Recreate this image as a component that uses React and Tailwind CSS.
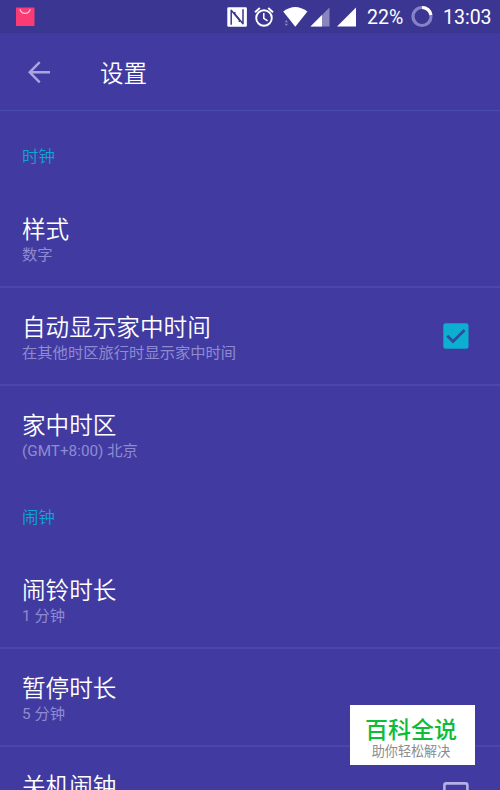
function StatusBar() {
  return (
    <div className="flex h-[33px] shrink-0 items-center bg-[#3a3692] text-white">
      <svg className="ml-4 h-[33px] w-[19px]" viewBox="0 0 19 33">
        <rect x="0" y="7.5" width="18.5" height="18.5" rx="0.8" fill="#fb3b74" />
        <path d="M4 9.2 A5.2 5.2 0 0 0 14.2 9.2" fill="none" stroke="#ffc6dc" strokeWidth="1.3" />
      </svg>
      <svg className="ml-[192px] h-[33px] w-[131px]" viewBox="227 0 131 33" fill="#fff">
        <rect x="227.3" y="7.2" width="19.6" height="19.6" rx="1.2" />
        <g fill="none" stroke="#3a3692" strokeWidth="1.5" strokeLinejoin="round">
          <path d="M231.2 24.8 V10.2 L239.4 20 V22" />
          <path d="M243 9.2 V23.8 L234.8 14 V12" />
        </g>
        <g fill="none" stroke="#fff" strokeWidth="1.9">
          <circle cx="264" cy="18" r="7.8" />
          <path d="M255 12.2 L259.8 8" />
          <path d="M273 12.2 L268.2 8" />
          <path d="M263.8 13 V18.4 L267.6 20.8" strokeWidth="1.5" />
        </g>
        <path d="M283.2 11.6 Q295.2 2.6 307.4 11.6 L295.3 26.8 Z" />
        <path d="M286.3 20 l1.7 2.2 h-3.4z M286.3 26 l1.7 -2.2 h-3.4z" opacity=".4" />
        <path d="M329.5 7.5 V26.5 H310.5 Z" opacity=".4" />
        <path d="M322 15 V26.5 H310.5 Z" />
        <path d="M356 7.5 V26.5 H337 Z" />
      </svg>
      <span className="ml-[9px] mt-[2px] w-[44px] text-[19.5px] leading-6">22%</span>
      <svg className="h-[33px] w-[22px]" viewBox="0 0 22 33" fill="none" strokeWidth="3.2">
        <circle cx="11" cy="16.5" r="9" stroke="#8582c8" />
        <path d="M11 7.5 A9 9 0 0 1 20 15" stroke="#fff" />
      </svg>
      <span className="ml-[10px] mt-[2px] text-[19.5px] leading-6">13:03</span>
    </div>
  );
}

function Header() {
  return (
    <header className="flex h-[78px] shrink-0 items-center border-b border-[#4a4bb0]">
      <svg className="ml-[27px] h-6 w-6" viewBox="0 0 24 24" fill="none" stroke="#aaa5e2" strokeWidth="2.4">
        <path d="M23 12.3 H3 M12.7 2.2 L2.7 12.3 L12.7 22.4" />
      </svg>
      <h1 className="ml-[49px] mt-1 text-[23.5px] font-[350] leading-7 text-white">设置</h1>
    </header>
  );
}

function Section({ children, className }) {
  return (
    <h2 className={`shrink-0 pl-[22px] text-[16.4px] font-[350] leading-6 text-[#12a5cf] ${className}`}>
      {children}
    </h2>
  );
}

function Row({ title, detail, divider = true, control }) {
  return (
    <div
      className={`flex h-[97.7px] shrink-0 items-center justify-between pl-[22px] pr-[31.5px] ${
        divider ? "border-b-2 border-[#4946ac]" : ""
      }`}
    >
      <div className="flex flex-col self-start pt-[25.6px]">
        <span className="text-[23.6px] font-[350] leading-7 text-white">{title}</span>
        {detail && <span className="text-[15.3px] leading-[23px] text-[#8f8bd2]">{detail}</span>}
      </div>
      {control}
    </div>
  );
}

function Checkbox({ checked }) {
  return (
    <svg className="h-[26px] w-[26px]" viewBox="0 0 26 26" fill="none">
      {checked ? (
        <>
          <rect x="0.3" y="0.3" width="25.2" height="25.4" rx="2.5" fill="#0cafcf" />
          <path d="M4.3 12.8 L10 18.6 L21.6 7" stroke="#2f4ba2" strokeWidth="2.8" />
        </>
      ) : (
        <rect x="1.4" y="1.4" width="23" height="23" rx="2" stroke="#b5b1e6" strokeWidth="2.6" />
      )}
    </svg>
  );
}

export default function App() {
  return (
    <div className="relative flex h-[790px] w-[500px] flex-col overflow-hidden bg-[#413ba1] font-[Roboto,'Noto_Sans_CJK_SC',sans-serif]">
      <StatusBar />
      <Header />
      <Section className="h-[79.6px] pt-[34px]">时钟</Section>
      <Row title="样式" detail="数字" />
      <Row title="自动显示家中时间" detail="在其他时区旅行时显示家中时间" control={<Checkbox checked />} />
      <Row title="家中时区" detail="(GMT+8:00) 北京" divider={false} />
      <Section className="h-[68px] pt-[22.4px]">闹钟</Section>
      <Row title="闹铃时长" detail="1 分钟" />
      <Row title="暂停时长" detail="5 分钟" />
      <Row title="关机闹钟" control={<Checkbox />} />
      <div className="absolute left-[350px] top-[705px] flex h-[60px] w-[125px] flex-col items-center bg-white pr-[3px] pt-[11px]">
        <span className="text-[23px] font-medium leading-[29px] text-[#0dbc37]">百科全说</span>
        <span className="text-[13.1px] leading-[14px] text-[#8c8c8c]">助你轻松解决</span>
      </div>
    </div>
  );
}
